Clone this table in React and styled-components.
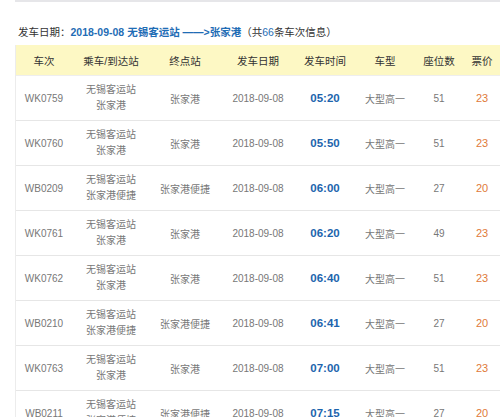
import React from 'react';
import styled, { createGlobalStyle } from 'styled-components';

const GlobalStyle = createGlobalStyle`
  html, body {
    margin: 0;
    padding: 0;
    background: #fff;
    overflow: hidden;
  }
  body {
    font-family: "Liberation Sans", "Noto Sans CJK SC", sans-serif;
  }
`;

const COLS = '56px 78px 70px 76px 58px 62px 46px 40px';

const rows = [
  { no: 'WK0759', end: '张家港', time: '05:20', seats: 51, price: 23 },
  { no: 'WK0760', end: '张家港', time: '05:50', seats: 51, price: 23 },
  { no: 'WB0209', end: '张家港便捷', time: '06:00', seats: 27, price: 20 },
  { no: 'WK0761', end: '张家港', time: '06:20', seats: 49, price: 23 },
  { no: 'WK0762', end: '张家港', time: '06:40', seats: 51, price: 23 },
  { no: 'WB0210', end: '张家港便捷', time: '06:41', seats: 27, price: 20 },
  { no: 'WK0763', end: '张家港', time: '07:00', seats: 51, price: 23 },
  { no: 'WB0211', end: '张家港便捷', time: '07:15', seats: 27, price: 20 },
];

const headers = ['车次', '乘车/到达站', '终点站', '发车日期', '发车时间', '车型', '座位数', '票价'];

const App = () => {
  return (
    <>
      <GlobalStyle />
      <Page>
        <Title>
          发车日期：
          <Route>2018-09-08 无锡客运站 ——&gt;张家港</Route>
          （共<Count>66</Count>条车次信息）
        </Title>
        <Table>
          <HeadRow>
            {headers.map((h) => (
              <HeadCell key={h}>{h}</HeadCell>
            ))}
          </HeadRow>
          {rows.map((r) => (
            <Row key={r.no}>
              <Cell>{r.no}</Cell>
              <Cell>
                <Stack>
                  <span>无锡客运站</span>
                  <span>{r.end}</span>
                </Stack>
              </Cell>
              <Cell>{r.end}</Cell>
              <Cell>2018-09-08</Cell>
              <Time>{r.time}</Time>
              <Cell>大型高一</Cell>
              <Cell>{r.seats}</Cell>
              <Price>{r.price}</Price>
            </Row>
          ))}
        </Table>
      </Page>
    </>
  );
};

const Page = styled.div`
  margin-left: 15px;
  width: 485px;
  height: 417px;
  border-top: 2px solid #e6e6e9;
  overflow: hidden;
`;

const Title = styled.div`
  height: 43px;
  padding-left: 3px;
  display: flex;
  align-items: center;
  padding-top: 1px;
  box-sizing: border-box;
  font-size: 10.5px;
  color: #333;
  white-space: nowrap;
  padding-top: 16px;
`;

const Route = styled.span`
  color: #1f6db5;
  font-weight: bold;
`;

const Count = styled.span`
  color: #1f6db5;
`;

const Table = styled.div`
  border-left: 1px solid #ececec;
`;

const HeadRow = styled.div`
  display: grid;
  grid-template-columns: ${COLS};
  height: 30px;
  background: #fdf8c4;
  border-bottom: 1px solid #eeeeee;
`;

const HeadCell = styled.div`
  display: flex;
  align-items: center;
  justify-content: center;
  font-size: 10.5px;
  color: #333;
  white-space: nowrap;
`;

const Row = styled.div`
  display: grid;
  grid-template-columns: ${COLS};
  height: 44px;
  border-bottom: 1px solid #e6e6e6;
`;

const Cell = styled.div`
  display: flex;
  align-items: center;
  justify-content: center;
  font-size: 10px;
  color: #777;
  white-space: nowrap;
`;

const Stack = styled.div`
  display: flex;
  flex-direction: column;
  align-items: center;
  line-height: 16px;
`;

const Time = styled(Cell)`
  color: #1c64ad;
  font-weight: bold;
  font-size: 11.5px;
`;

const Price = styled(Cell)`
  color: #e07a3a;
  font-size: 11px;
`;

export default App;
